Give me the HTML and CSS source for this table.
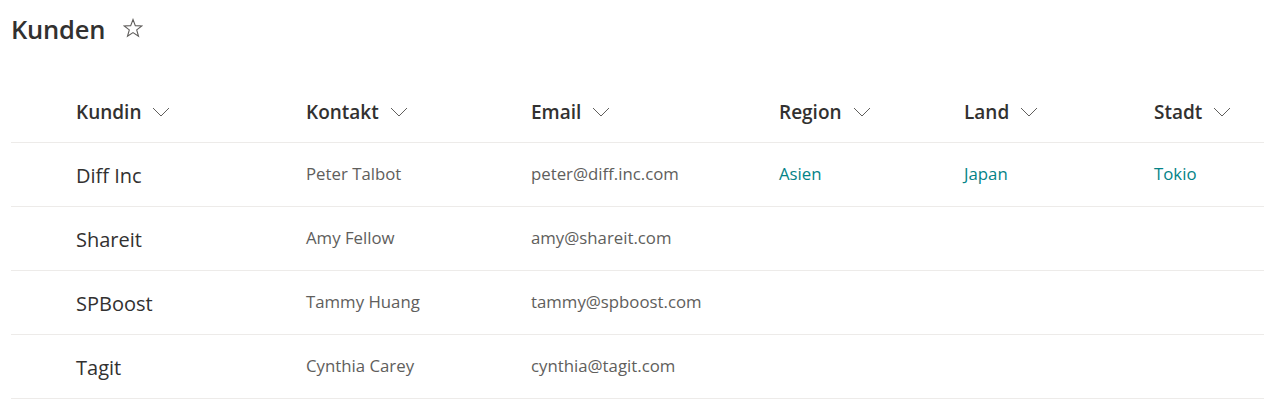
FILE: index.html
```html
<!DOCTYPE html>
<html lang="de">
<head>
<meta charset="utf-8">
<title>Kunden</title>
<link rel="stylesheet" href="styles.css">
</head>
<body>
<div class="page">
  <div class="title-bar">
    <h1 class="title">Kunden</h1>
    <svg class="star" width="20" height="20" viewBox="0 0 20 20"><path d="M10 1.5 L12.3 7.6 L18.8 7.9 L13.7 11.9 L15.5 18.3 L10 14.6 L4.5 18.3 L6.3 11.9 L1.2 7.9 L7.7 7.6 Z" fill="none" stroke="#605e5c" stroke-width="1.1" stroke-linejoin="miter"/></svg>
  </div>
  <div class="list">
    <div class="row header">
      <div class="cell"><span>Kundin</span><svg class="chev" width="18" height="10" viewBox="0 0 18 10"><path d="M1 1 L9 9 L17 1" fill="none" stroke="#605e5c" stroke-width="1"/></svg></div>
      <div class="cell"><span>Kontakt</span><svg class="chev" width="18" height="10" viewBox="0 0 18 10"><path d="M1 1 L9 9 L17 1" fill="none" stroke="#605e5c" stroke-width="1"/></svg></div>
      <div class="cell"><span>Email</span><svg class="chev" width="18" height="10" viewBox="0 0 18 10"><path d="M1 1 L9 9 L17 1" fill="none" stroke="#605e5c" stroke-width="1"/></svg></div>
      <div class="cell"><span>Region</span><svg class="chev" width="18" height="10" viewBox="0 0 18 10"><path d="M1 1 L9 9 L17 1" fill="none" stroke="#605e5c" stroke-width="1"/></svg></div>
      <div class="cell"><span>Land</span><svg class="chev" width="18" height="10" viewBox="0 0 18 10"><path d="M1 1 L9 9 L17 1" fill="none" stroke="#605e5c" stroke-width="1"/></svg></div>
      <div class="cell"><span>Stadt</span><svg class="chev" width="18" height="10" viewBox="0 0 18 10"><path d="M1 1 L9 9 L17 1" fill="none" stroke="#605e5c" stroke-width="1"/></svg></div>
    </div>
    <div class="row">
      <div class="cell name">Diff Inc</div>
      <div class="cell">Peter Talbot</div>
      <div class="cell">peter@diff.inc.com</div>
      <div class="cell link">Asien</div>
      <div class="cell link">Japan</div>
      <div class="cell link">Tokio</div>
    </div>
    <div class="row">
      <div class="cell name">Shareit</div>
      <div class="cell">Amy Fellow</div>
      <div class="cell">amy@shareit.com</div>
      <div class="cell"></div>
      <div class="cell"></div>
      <div class="cell"></div>
    </div>
    <div class="row">
      <div class="cell name">SPBoost</div>
      <div class="cell">Tammy Huang</div>
      <div class="cell">tammy@spboost.com</div>
      <div class="cell"></div>
      <div class="cell"></div>
      <div class="cell"></div>
    </div>
    <div class="row">
      <div class="cell name">Tagit</div>
      <div class="cell">Cynthia Carey</div>
      <div class="cell">cynthia@tagit.com</div>
      <div class="cell"></div>
      <div class="cell"></div>
      <div class="cell"></div>
    </div>
  </div>
</div>
</body>
</html>
```
FILE: styles.css
```css
html, body {
  margin: 0;
  padding: 0;
  background: #ffffff;
}
body {
  font-family: "Open Sans", "Noto Sans", "Liberation Sans", sans-serif;
  color: #323130;
}
.page {
  width: 1264px;
  height: 407px;
  overflow: hidden;
}
.title-bar {
  display: flex;
  align-items: center;
  gap: 18px;
  height: 58px;
  padding-left: 11px;
}
.title {
  margin: 0;
  font-size: 25.5px;
  font-weight: 600;
  color: #323130;
  letter-spacing: -0.2px;
}
.star {
  display: block;
  margin-top: -2px;
}
.list {
  margin-top: 21px;
  margin-left: 11px;
}
.row {
  display: grid;
  grid-template-columns: 230px 225px 248px 185px 190px 1fr;
  padding-left: 65px;
  height: 63px;
  border-bottom: 1px solid #edebe9;
  align-items: center;
}
.row.header {
  height: 63px;
}
.header .cell {
  display: flex;
  align-items: center;
  gap: 11px;
  font-size: 19px;
  font-weight: 600;
  color: #323130;
  padding-top: 2px;
  padding-bottom: 0;
}
.chev {
  display: block;
  margin-top: 1px;
}
.cell {
  font-size: 16.8px;
  color: #605e5c;
  white-space: nowrap;
  padding-bottom: 3px;
}
.cell.name {
  font-size: 20px;
  color: #323130;
  padding-top: 2px;
  padding-bottom: 0;
}
.cell.link {
  color: #038387;
}
```
